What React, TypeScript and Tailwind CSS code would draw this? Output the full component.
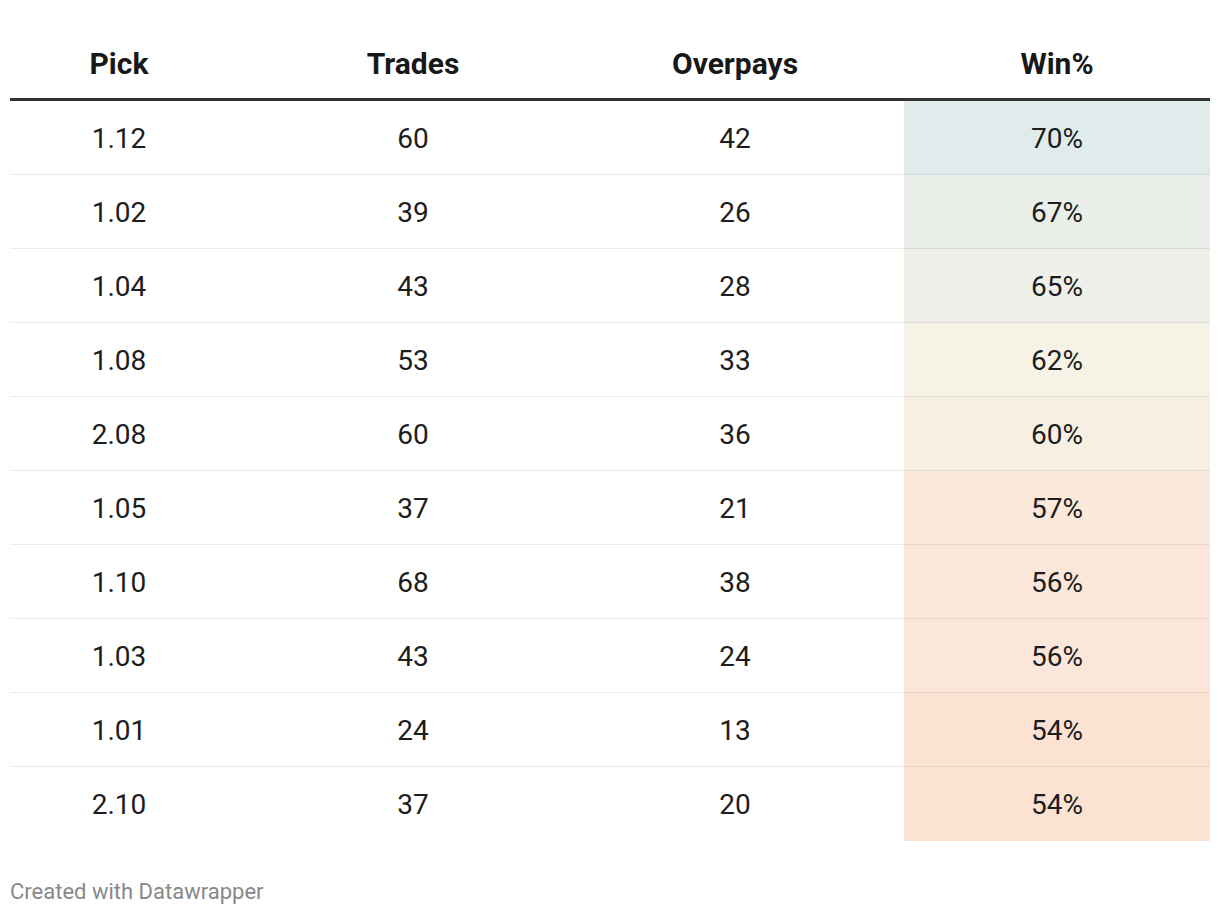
import React from "react";

const rows: [string, string, string, string, string][] = [
  ["1.12", "60", "42", "70%", "#dfeceb"],
  ["1.02", "39", "26", "67%", "#e9eee8"],
  ["1.04", "43", "28", "65%", "#eff0ea"],
  ["1.08", "53", "33", "62%", "#f6f3e6"],
  ["2.08", "60", "36", "60%", "#f6f0e2"],
  ["1.05", "37", "21", "57%", "#fae8da"],
  ["1.10", "68", "38", "56%", "#fae7d9"],
  ["1.03", "43", "24", "56%", "#fae7d9"],
  ["1.01", "24", "13", "54%", "#fbe2d3"],
  ["2.10", "37", "20", "54%", "#fbe2d3"],
];

export default function App() {
  return (
    <div
      className="min-h-[916px] w-[1220px] bg-white px-[10px] text-[#1d1d1d]"
      style={{ fontFamily: "Roboto, 'Noto Sans', sans-serif" }}
    >
      <div className="grid grid-cols-[218px_370px_306px_306px] border-b-[3px] border-[#333333] pt-[43px] pb-[13px] text-[30px] font-bold leading-[42px] text-[#181818]">
        <div className="text-center">Pick</div>
        <div className="text-center">Trades</div>
        <div className="pr-[32px] text-center">Overpays</div>
        <div className="text-center">Win%</div>
      </div>
      {rows.map((r, i) => {
        const last = i === rows.length - 1;
        const b = last ? "" : "border-b border-[rgba(0,0,0,0.08)]";
        return (
          <div key={i} className="grid grid-cols-[218px_370px_306px_306px] text-[28px] leading-[42px]">
            <div className={`flex h-[74px] items-center justify-center pt-[2px] ${b}`}>{r[0]}</div>
            <div className={`flex h-[74px] items-center justify-center pt-[2px] ${b}`}>{r[1]}</div>
            <div className={`flex h-[74px] items-center justify-center pt-[2px] pr-[32px] ${b}`}>{r[2]}</div>
            <div
              className={`flex h-[74px] items-center justify-center pt-[2px] ${b}`}
              style={{ backgroundColor: r[4] }}
            >
              {r[3]}
            </div>
          </div>
        );
      })}
      <div className="mt-[36px] text-[22px] leading-[30px] text-[#888888]">Created with Datawrapper</div>
    </div>
  );
}
